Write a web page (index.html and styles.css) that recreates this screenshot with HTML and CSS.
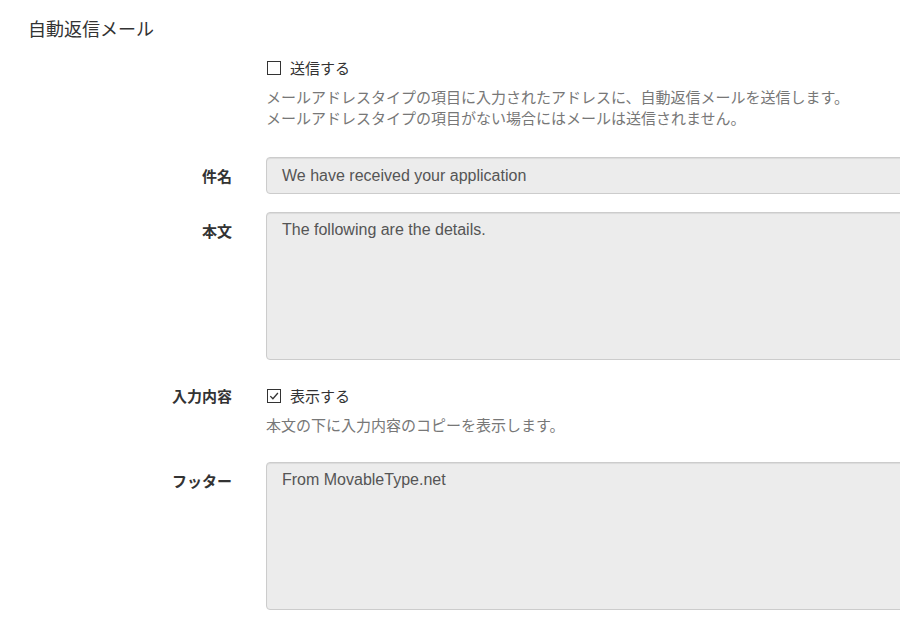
FILE: index.html
```html
<!DOCTYPE html>
<html lang="ja">
<head>
    <meta charset="UTF-8">
    <meta name="viewport" content="width=device-width, initial-scale=1.0">
    <title>自動返信メール</title>
    <link rel="stylesheet" href="styles.css">
</head>
<body>
    <div class="page">
        <h2 class="title">自動返信メール</h2>

        <div class="row row-help row-first">
            <div class="label"></div>
            <div class="field">
                <label class="check">
                    <span class="box"></span>
                    送信する
                </label>
                <p class="help">メールアドレスタイプの項目に入力されたアドレスに、自動返信メールを送信します。<br>メールアドレスタイプの項目がない場合にはメールは送信されません。</p>
            </div>
        </div>

        <div class="row">
            <div class="label">件名</div>
            <div class="field">
                <div class="input">We have received your application</div>
            </div>
        </div>

        <div class="row row-area">
            <div class="label">本文</div>
            <div class="field">
                <div class="textarea">The following are the details.</div>
            </div>
        </div>

        <div class="row row-help">
            <div class="label">入力内容</div>
            <div class="field">
                <label class="check">
                    <span class="box">
                        <svg width="12" height="12" viewBox="0 0 12 12"><path d="M2.3 6.1 L4.9 8.7 L9.9 3" fill="none" stroke="#333" stroke-width="1.3"/></svg>
                    </span>
                    表示する
                </label>
                <p class="help">本文の下に入力内容のコピーを表示します。</p>
            </div>
        </div>

        <div class="row">
            <div class="label">フッター</div>
            <div class="field">
                <div class="textarea">From MovableType.net</div>
            </div>
        </div>
    </div>
</body>
</html>
```

FILE: styles.css
```css
html, body {
    margin: 0;
    overflow: hidden;
}
body {
    font-family: "Noto Sans CJK JP", "Liberation Sans", sans-serif;
    color: #333;
    background: #fff;
}
.page {
    padding: 15px 0 0 28px;
    width: 1100px;
}
.title {
    font-size: 18px;
    font-weight: normal;
    line-height: 26px;
    margin: 0 0 16px;
}
.row {
    display: grid;
    grid-template-columns: 204px 700px;
    column-gap: 34px;
    margin-bottom: 18px;
}
.row-help {
    margin-bottom: 27px;
}
.row-first {
    margin-bottom: 29px;
}
.row-area {
    margin-bottom: 25px;
}
.label {
    text-align: right;
    font-size: 15px;
    font-weight: bold;
    line-height: 21px;
    padding-top: 8px;
}
.row-help .label {
    padding-top: 0;
}
.check {
    display: flex;
    align-items: center;
    gap: 9px;
    font-size: 15px;
    line-height: 21px;
}
.box {
    width: 12px;
    height: 12px;
    border: 1px solid #333;
    margin-left: 1px;
    display: flex;
    align-items: center;
    justify-content: center;
    background: #fff;
}
.help {
    margin: 8px 0 0;
    font-size: 15px;
    line-height: 21px;
    color: #777;
}
.input, .textarea {
    box-sizing: border-box;
    background: #ececec;
    border: 1px solid #ccc;
    border-radius: 4px;
    box-shadow: inset 0 1px 1px rgba(0,0,0,0.075);
    font-family: "Liberation Sans", Arial, sans-serif;
    font-size: 16px;
    color: #555;
    padding: 0 15px;
}
.input {
    height: 37px;
    line-height: 35px;
}
.textarea {
    height: 148px;
    padding-top: 7px;
    line-height: 20px;
}
```
